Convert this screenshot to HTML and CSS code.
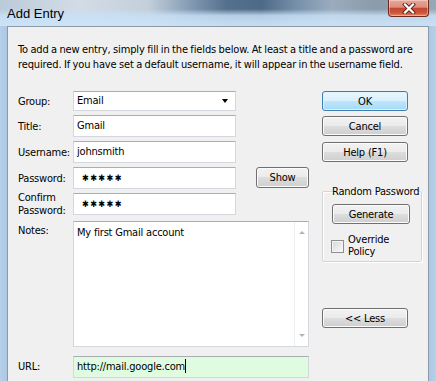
FILE: index.html
```html
<!DOCTYPE html>
<html lang="en">
<head>
  <meta charset="UTF-8">
  <meta name="viewport" content="width=device-width, initial-scale=1.0">
  <title>Add Entry</title>
  <link rel="stylesheet" href="styles.css">
</head>

<body>
  <div class="window">
    <div class="titlebar">
      <span class="title">Add Entry</span>
      <button class="close-btn" aria-label="Close">
        <svg width="14" height="11" viewBox="0 0 14 11">
          <path d="M3 1.5 L11 9.5 M11 1.5 L3 9.5" stroke="#5b2418" stroke-width="4" stroke-linecap="square"/>
          <path d="M3 1.5 L11 9.5 M11 1.5 L3 9.5" stroke="#fff" stroke-width="2.2" stroke-linecap="square"/>
        </svg>
      </button>
    </div>

    <div class="client">
      <p class="intro">To add a new entry, simply fill in the fields below. At least a title and a password are required. If you have set a default username, it will appear in the username field.</p>

      <div class="dialog-body">
        <div class="fields">
          <label class="field-label">Group:</label>
          <div class="combo">
            <span>Email</span>
            <span class="combo-arrow"></span>
          </div>

          <label class="field-label">Title:</label>
          <div class="textbox">Gmail</div>

          <label class="field-label">Username:</label>
          <div class="textbox">johnsmith</div>

          <label class="field-label">Password:</label>
          <div class="textbox stars">✱✱✱✱✱</div>
          <button class="btn show-btn">Show</button>

          <label class="field-label two-line">Confirm<br>Password:</label>
          <div class="textbox stars">✱✱✱✱✱</div>

          <label class="field-label notes-label">Notes:</label>
          <div class="notes">
            <div class="notes-text">My first Gmail account</div>
            <div class="scrollbar">
              <span class="arrow-up"></span>
              <span class="arrow-down"></span>
            </div>
          </div>

          <label class="field-label url-label">URL:</label>
          <div class="textbox url">http://mail.google.com<span class="caret"></span></div>
        </div>

        <div class="actions">
          <button class="btn btn-default">OK</button>
          <button class="btn cancel-btn">Cancel</button>
          <button class="btn help-btn">Help (F1)</button>

          <fieldset class="random-box">
            <legend>Random Password</legend>
            <button class="btn generate-btn">Generate</button>
            <div class="check-row">
              <span class="checkbox"></span>
              <span class="check-label">Override<br>Policy</span>
            </div>
          </fieldset>

          <button class="btn less-btn">&lt;&lt; Less</button>
        </div>
      </div>
    </div>
  </div>
</body>
</html>
```

FILE: styles.css
```css
body {
  margin: 0;
  font-family: "DejaVu Sans Condensed", "DejaVu Sans", sans-serif;
  font-stretch: condensed;
  font-size: 11px;
  letter-spacing: -0.2px;
  color: #000;
}

.window {
  width: 436px;
  height: 381px;
  display: flex;
  flex-direction: column;
  overflow: hidden;
  background: linear-gradient(90deg, #b7d0ea 0%, #a9c6e4 2%, #c4d9ee 50%, #a9c6e4 98%, #b7d0ea 100%);
}

/* title bar, aero glass look */
.titlebar {
  height: 26px;
  flex-shrink: 0;
  display: flex;
  justify-content: space-between;
  align-items: flex-start;
  padding: 0 7px;
  background:
    linear-gradient(180deg, rgba(255,255,255,0) 0%, rgba(255,255,255,0) 35%, rgba(200,224,246,0.85) 60%, rgba(205,227,247,0.95) 100%),
    linear-gradient(90deg, #bccbd9 0%, #d2dce6 18%, #c3cfdb 34%, #8199b1 44%, #55708c 52%, #4f6a86 60%, #7690aa 68%, #9aacbd 76%, #8a9bab 86%, #97a8b8 100%);
}

.title {
  font-family: "Liberation Sans", sans-serif;
  font-size: 13px;
  letter-spacing: 0;
  color: #000;
  padding-top: 6px;
}

.close-btn {
  width: 41px;
  height: 17px;
  padding: 0;
  border: 1px solid #6e2b1f;
  border-top: none;
  border-radius: 0 0 4px 4px;
  background: linear-gradient(180deg, #e9a797 0%, #dc8e7c 45%, #c4462f 52%, #cf5539 80%, #e38a6c 100%);
  box-shadow: inset 0 0 0 1px rgba(255,255,255,0.35);
  display: flex;
  align-items: center;
  justify-content: center;
}

.client {
  flex: 1;
  margin: 0 7px;
  border: 1px solid #8c9aa8;
  border-bottom: none;
  background: #f0f0f0;
  padding: 15px 5px 0 10px;
}

.intro {
  margin: 0;
  line-height: 15px;
  letter-spacing: -0.12px;
  word-spacing: -0.6px;
}

.dialog-body {
  display: flex;
  gap: 13px;
  margin-top: 19px;
}

/* left side: labels and fields */
.fields {
  display: grid;
  grid-template-columns: 55px 163px 20px 53px;
  grid-template-rows: 20px 22px 22px 22px 22px 128px 27px;
  row-gap: 4px;
}

.field-label {
  grid-column: 1;
  align-self: center;
  line-height: 13px;
  white-space: nowrap;
}

.two-line {
  line-height: 13px;
}

.notes-label {
  align-self: start;
  padding-top: 5px;
}

.url-label {
  align-self: end;
  line-height: 22px;
}

.textbox,
.combo {
  grid-column: 2;
  box-sizing: border-box;
  background: #fff;
  border: 1px solid #d3d7de;
  border-top-color: #abadb3;
  padding: 0 3px;
  line-height: 20px;
  white-space: nowrap;
}

.combo {
  line-height: 18px;
  display: flex;
  justify-content: space-between;
  align-items: center;
}

.combo-arrow {
  width: 0;
  height: 0;
  margin-right: 4px;
  border-left: 3.5px solid transparent;
  border-right: 3.5px solid transparent;
  border-top: 4px solid #000;
}

.stars {
  padding-left: 8px;
  font-family: "DejaVu Sans", sans-serif;
  font-size: 9px;
  letter-spacing: 1.4px;
}

.show-btn {
  grid-column: 4;
  grid-row: 4;
}

.notes {
  grid-column: 2 / 5;
  align-self: end;
  height: 126px;
  box-sizing: border-box;
  background: #fff;
  border: 1px solid #d3d7de;
  border-top-color: #abadb3;
  display: flex;
}

.notes-text {
  flex: 1;
  padding: 4px 3px;
  line-height: 13px;
}

.scrollbar {
  width: 13px;
  border-left: 1px solid #eceef0;
  display: flex;
  flex-direction: column;
  justify-content: space-between;
  align-items: center;
  padding: 9px 0 9px;
}

.arrow-up,
.arrow-down {
  width: 0;
  height: 0;
  border-left: 3px solid transparent;
  border-right: 3px solid transparent;
}

.arrow-up {
  border-bottom: 3px solid #b4b4b4;
}

.arrow-down {
  border-top: 3px solid #b4b4b4;
}

.url {
  grid-column: 2 / 5;
  align-self: end;
  height: 22px;
  background: #e0fce0;
}

.caret {
  display: inline-block;
  width: 1px;
  height: 14px;
  background: #000;
  vertical-align: -3px;
}

/* right side: buttons */
.actions {
  width: 100px;
  display: flex;
  flex-direction: column;
  align-items: flex-start;
}

.btn {
  font: inherit;
  letter-spacing: inherit;
  color: #000;
  height: 20px;
  padding: 0;
  border: 1px solid #707070;
  border-radius: 3px;
  background: linear-gradient(180deg, #f2f2f2 0%, #ebebeb 50%, #dddddd 50%, #cfcfcf 100%);
  box-shadow: inset 0 0 0 1px #fcfcfc;
  line-height: 17px;
}

.btn-default,
.cancel-btn,
.help-btn,
.less-btn {
  width: 86px;
}

.btn-default {
  border-color: #3c7fb1;
  background: linear-gradient(180deg, #eaf6fd 0%, #d9f0fc 50%, #bee6fd 50%, #a7d9f5 100%);
  box-shadow: inset 0 0 0 1px #dff2fc;
}

.cancel-btn {
  margin-top: 5px;
}

.help-btn {
  margin-top: 6px;
}

.show-btn {
  height: 21px;
  width: 53px;
}

.random-box {
  width: 100px;
  box-sizing: border-box;
  margin: 23px 0 0;
  padding: 6px 0 3px 9px;
  border: 1px solid #d5d5d5;
  border-radius: 2px;
  box-shadow: 1px 1px 0 #fff, inset 1px 1px 0 #fff;
}

.random-box legend {
  padding: 0;
  white-space: nowrap;
  line-height: 13px;
}

.generate-btn {
  width: 78px;
  height: 20px;
}

.check-row {
  display: flex;
  align-items: center;
  gap: 4px;
  margin-top: 10px;
  margin-left: -1px;
}

.checkbox {
  width: 13px;
  height: 13px;
  box-sizing: border-box;
  border: 1px solid #8f8f8f;
  background: linear-gradient(135deg, #d8d8d8 0%, #ececec 60%, #fbfbfb 100%);
  box-shadow: inset 0 0 0 1px #f4f4f4;
}

.check-label {
  line-height: 12px;
}

.less-btn {
  margin-top: 46px;
}
```
